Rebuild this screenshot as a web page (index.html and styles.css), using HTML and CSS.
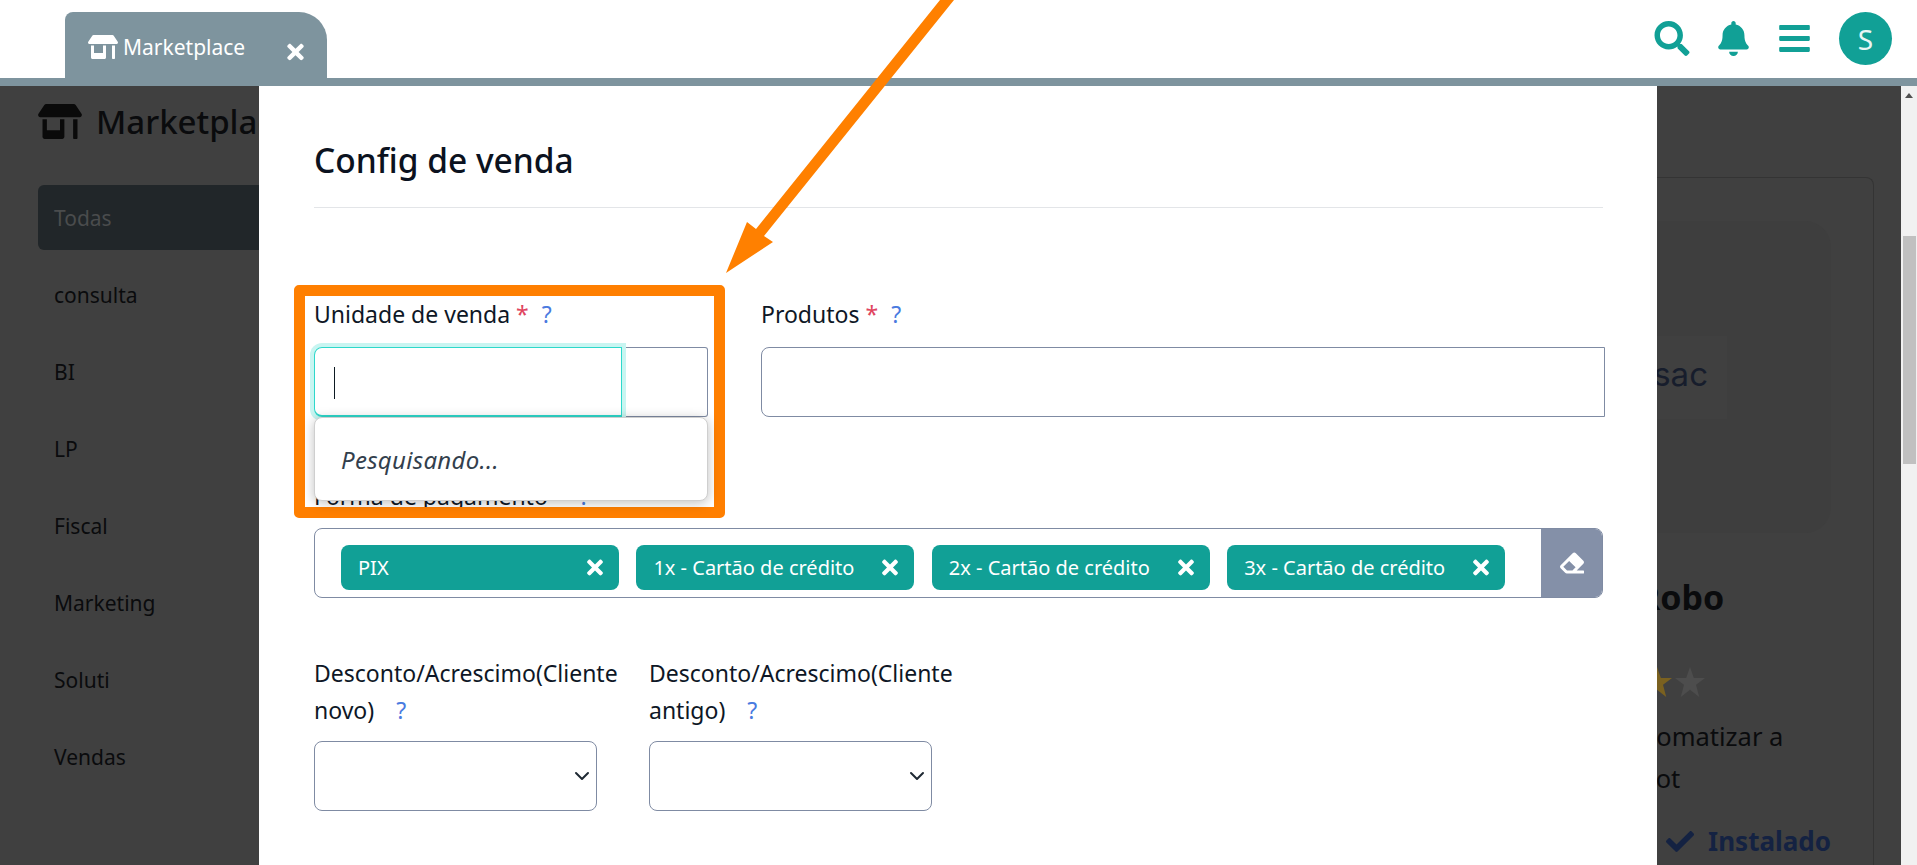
FILE: index.html
```html
<!DOCTYPE html>
<html>
  <head>
    <title>Marketplace</title>
    <link rel="stylesheet" href="styles.css">
  </head>
  <body>
    <svg class="defs">
      <symbol id="i-store" viewBox="0 0 640 512"><path d="M320 384H128V224H64v256c0 17.7 14.3 32 32 32h256c17.7 0 32-14.3 32-32V224h-64v160zm314.6-241.8l-85.3-128c-6-8.9-16-14.2-26.7-14.2H117.4c-10.7 0-20.7 5.3-26.6 14.2l-85.3 128c-14.2 21.3 1 49.8 26.6 49.8H608c25.5 0 40.7-28.5 26.6-49.8zM512 496c0 8.8 7.2 16 16 16h32c8.8 0 16-7.2 16-16V224h-64v272z"/></symbol>
      <symbol id="i-times" viewBox="0 0 352 512"><path d="M242.72 256l100.07-100.07c12.28-12.28 12.28-32.19 0-44.48l-22.24-22.24c-12.28-12.28-32.19-12.28-44.48 0L176 189.28 75.93 89.21c-12.28-12.28-32.19-12.28-44.48 0L9.21 111.45c-12.28 12.28-12.28 32.19 0 44.48L109.28 256 9.21 356.07c-12.28 12.28-12.28 32.19 0 44.48l22.24 22.24c12.28 12.28 32.2 12.28 44.48 0L176 322.72l100.07 100.07c12.28 12.28 32.2 12.28 44.48 0l22.24-22.24c12.28-12.28 12.28-32.19 0-44.48L242.72 256z"/></symbol>
      <symbol id="i-chevron" viewBox="0 0 16 16"><path d="M2 5l6 6 6-6" fill="none" stroke="currentColor" stroke-width="2" stroke-linecap="round" stroke-linejoin="round"/></symbol>
      <symbol id="i-star" viewBox="0 0 28 28"><path d="M14 0l3.6 10.200H28l-8.400 6.400 3 11.400L14 21.200 5.400 28l3-11.400L0 10.200h10.400z"/></symbol>
    </svg>

    <header class="topbar">
      <div class="tab">
        <svg class="tab-icon"><use href="#i-store"/></svg>
        <span class="tab-name">Marketplace</span>
        <svg class="tab-close"><use href="#i-times"/></svg>
      </div>
      <div class="topbar-actions">
        <svg class="action action-search" viewBox="0 0 512 512"><path d="M505 442.7L405.3 343c-4.500-4.500-10.600-7-17-7H372c27.600-35.300 44-79.700 44-128C416 93.100 322.900 0 208 0S0 93.100 0 208s93.100 208 208 208c48.300 0 92.700-16.400 128-44v16.300c0 6.400 2.500 12.500 7 17l99.700 99.700c9.400 9.400 24.600 9.400 33.900 0l28.300-28.300c9.400-9.400 9.400-24.600.1-34zM208 336c-70.700 0-128-57.200-128-128 0-70.700 57.200-128 128-128 70.700 0 128 57.200 128 128 0 70.700-57.200 128-128 128z"/></svg>
        <svg class="action action-bell" viewBox="0 0 448 512"><path d="M224 512c35.320 0 63.970-28.650 63.970-64H160.030c0 35.350 28.650 64 63.970 64zm215.390-149.710c-19.320-20.760-55.470-51.990-55.470-154.290 0-77.700-54.480-139.900-127.940-155.160V32c0-17.670-14.320-32-31.980-32s-31.980 14.330-31.980 32v20.840C118.560 68.100 64.080 130.300 64.080 208c0 102.300-36.150 133.530-55.470 154.290-6 6.450-8.660 14.160-8.610 21.710.11 16.400 12.980 32 32.100 32h383.800c19.120 0 32-15.600 32.100-32 .05-7.550-2.610-15.270-8.610-21.710z"/></svg>
        <svg class="action action-bars" viewBox="0 0 448 512"><path d="M16 132h416c8.837 0 16-7.163 16-16V76c0-8.837-7.163-16-16-16H16C7.163 60 0 67.163 0 76v40c0 8.837 7.163 16 16 16zm0 160h416c8.837 0 16-7.163 16-16v-40c0-8.837-7.163-16-16-16H16c-8.837 0-16 7.163-16 16v40c0 8.837 7.163 16 16 16zm0 160h416c8.837 0 16-7.163 16-16v-40c0-8.837-7.163-16-16-16H16c-8.837 0-16 7.163-16 16v40c0 8.837 7.163 16 16 16z"/></svg>
        <div class="avatar">S</div>
      </div>
    </header>

    <div class="workspace">
      <div class="page">
        <aside class="sidebar">
          <h2 class="page-title">
            <svg class="page-icon"><use href="#i-store"/></svg>
            Marketplace
          </h2>
          <ul class="categories">
            <li class="active">Todas</li>
            <li>consulta</li>
            <li>BI</li>
            <li>LP</li>
            <li>Fiscal</li>
            <li>Marketing</li>
            <li>Soluti</li>
            <li>Vendas</li>
          </ul>
        </aside>
        <main class="catalog">
          <article class="plugin">
            <div class="plugin-tile">
              <div class="plugin-logo">Robosac</div>
            </div>
            <div class="plugin-info">
              <h3>Robo</h3>
              <div class="stars">
                <svg class="star gold"><use href="#i-star"/></svg>
                <svg class="star"><use href="#i-star"/></svg>
              </div>
              <p>Automatizar a<span class="second-line">bot</span></p>
              <div class="installed">
                <svg viewBox="0 0 512 512"><path d="M173.898 439.404l-166.400-166.400c-9.997-9.997-9.997-26.206 0-36.204l36.203-36.204c9.997-9.998 26.207-9.998 36.204 0L192 312.690 432.095 72.596c9.997-9.997 26.207-9.997 36.204 0l36.203 36.204c9.997 9.997 9.997 26.206 0 36.204l-294.400 294.401c-9.998 9.997-26.207 9.997-36.204-.001z"/></svg>
                Instalado
              </div>
            </div>
          </article>
        </main>
      </div>

      <div class="scrollbar">
        <span class="scroll-up"></span>
        <span class="scroll-thumb"></span>
      </div>

      <section class="modal">
        <h1 class="modal-title">Config de venda</h1>

        <div class="row row-top">
          <div class="field">
            <label>Unidade de venda <span class="req">*</span> <span class="help">?</span></label>
            <div class="combo">
              <div class="combo-input"><span class="caret"></span></div>
              <div class="combo-side"></div>
              <div class="dropdown">Pesquisando...</div>
            </div>
          </div>
          <div class="field">
            <label>Produtos <span class="req">*</span> <span class="help">?</span></label>
            <div class="input"></div>
          </div>
        </div>

        <div class="field field-payment">
          <label>Forma de pagamento <span class="req">*</span> <span class="help">?</span></label>
          <div class="multi">
            <div class="chips">
              <span class="chip">PIX <svg><use href="#i-times"/></svg></span>
              <span class="chip">1x - Cartão de crédito <svg><use href="#i-times"/></svg></span>
              <span class="chip">2x - Cartão de crédito <svg><use href="#i-times"/></svg></span>
              <span class="chip">3x - Cartão de crédito <svg><use href="#i-times"/></svg></span>
            </div>
            <div class="clear">
              <svg viewBox="0 0 512 512"><path d="M497.941 273.941c18.745-18.745 18.745-49.137 0-67.882l-160-160c-18.745-18.745-49.136-18.746-67.883 0l-256 256c-18.745 18.745-18.745 49.137 0 67.882l96 96A48.004 48.004 0 0 0 144 480h356c6.627 0 12-5.373 12-12v-40c0-6.627-5.373-12-12-12H355.883l142.058-142.059zm-302.627-62.627l137.373 137.373L265.373 416H150.628l-80-80 124.686-124.686z"/></svg>
            </div>
          </div>
        </div>

        <div class="row row-discount">
          <div class="field">
            <label>Desconto/Acrescimo(Cliente novo) <span class="help">?</span></label>
            <div class="select"><svg><use href="#i-chevron"/></svg></div>
          </div>
          <div class="field">
            <label>Desconto/Acrescimo(Cliente antigo) <span class="help">?</span></label>
            <div class="select"><svg><use href="#i-chevron"/></svg></div>
          </div>
        </div>
      </section>
    </div>

    <!-- anotacao por cima do print -->
    <div class="highlight"></div>
    <svg class="arrow" viewBox="0 0 1917 865"><polygon points="726,273 747,222 756,229 940,0 954,0 764,236 773,242"/></svg>
  </body>
</html>
```

FILE: styles.css
```css
* {
  box-sizing: border-box;
}
html, body {
  height: 100%;
}
body {
  margin: 0;
  overflow: hidden;
  display: flex;
  flex-direction: column;
  position: relative;
  font-family: "Noto Sans", "Open Sans", sans-serif;
  font-size: 23px;
  color: #0e1726;
  background-color: #fff;
}
.defs {
  display: none;
}

/* top bar */
.topbar {
  height: 86px;
  flex: none;
  display: flex;
  align-items: flex-end;
  justify-content: space-between;
  padding-left: 65px;
  background-color: #fff;
  border-bottom: 8px solid #7e949e;
}
.tab {
  width: 262px;
  height: 66px;
  display: flex;
  align-items: center;
  padding: 6px 23px 0 23px;
  color: #fff;
  background-color: #7e949e;
  border-radius: 8px 28px 0 0;
}
.tab-icon {
  width: 30px;
  height: 24px;
  fill: #fff;
  margin-top: -2px;
}
.tab-name {
  margin: -3px 0 0 5px;
  font-size: 21px;
  flex: 1;
}
.tab-close {
  width: 17px;
  height: 24px;
  fill: #fff;
  margin-top: 7px;
}
.topbar-actions {
  align-self: flex-start;
  display: flex;
  align-items: center;
  padding: 12px 25px 0 0;
  gap: 29px;
}
.action {
  fill: #11a096;
  width: 36px;
  height: 35px;
}
.action-bell {
  width: 31px;
  margin: 0 1px 0 -1px;
}
.action-bars {
  width: 31px;
}
.avatar {
  width: 53px;
  height: 53px;
  border-radius: 50%;
  background-color: #11a096;
  color: #e9f6f5;
  font-size: 28px;
  display: flex;
  align-items: center;
  justify-content: center;
}

/* page behind the modal */
.workspace {
  flex: 1;
  min-height: 0;
  display: flex;
  position: relative;
}
.page {
  flex: 1;
  min-width: 0;
  display: flex;
  background-color: #404040;
  color: #0a0b0d;
}
.sidebar {
  width: 360px;
  flex: none;
  padding: 18px 0 0 38px;
}
.page-title {
  margin: 0;
  height: 35px;
  display: flex;
  align-items: center;
  gap: 14px;
  font-size: 33px;
  font-weight: 500;
  white-space: nowrap;
}
.page-icon {
  width: 44px;
  height: 35px;
  fill: #0a0a0a;
}
.categories {
  list-style: none;
  margin: 46px 0 0;
  padding: 0;
  display: flex;
  flex-direction: column;
  gap: 12px;
  font-size: 21px;
}
.categories li {
  height: 65px;
  display: flex;
  align-items: center;
  padding-left: 16px;
  border-radius: 6px;
}
.categories .active {
  background-color: #212629;
  color: #4a4c4d;
}
.catalog {
  flex: 1;
  margin: 91px 27px 0 30px;
  padding: 43px 42px 0;
  display: flex;
  justify-content: flex-end;
  border: 1px solid #343434;
  border-bottom: 0;
  border-radius: 8px 8px 0 0;
}
.plugin {
  width: 332px;
}
.plugin-tile {
  height: 312px;
  display: flex;
  align-items: center;
  justify-content: center;
  background-color: #3e3e3e;
  border-radius: 26px;
}
.plugin-logo {
  width: 124px;
  height: 83px;
  display: flex;
  align-items: center;
  justify-content: flex-end;
  padding: 0 19px 6px 0;
  background-color: #404040;
  font-family: Inter, sans-serif;
  font-size: 33px;
  color: #171d2c;
  white-space: nowrap;
  overflow: hidden;
}
.plugin-info {
  padding-left: 141px;
}
.plugin-info h3 {
  margin: 40px 0 0 -2px;
  font-size: 34px;
  font-weight: 700;
  line-height: 48px;
}
.stars {
  margin: 46px 0 0 2px;
  display: flex;
  gap: 3px;
}
.star {
  width: 30px;
  height: 30px;
  fill: #4d4d4d;
}
.star.gold {
  fill: #7a6120;
}
.plugin-info p {
  margin: 18px 0 0 -25px;
  font-size: 25.500px;
  line-height: 42px;
  white-space: nowrap;
}
.second-line {
  display: block;
  padding-left: 25px;
}
.installed {
  margin: 24px 0 0 26px;
  display: flex;
  align-items: center;
  gap: 14px;
  font-size: 26px;
  font-weight: 700;
  color: #142242;
  white-space: nowrap;
}
.installed svg {
  width: 29px;
  height: 29px;
  fill: #142242;
}

/* fake scrollbar */
.scrollbar {
  width: 16px;
  flex: none;
  display: flex;
  flex-direction: column;
  align-items: center;
  padding-top: 7px;
  background-color: #f1f1f1;
}
.scroll-up {
  border: 4px solid transparent;
  border-top: 0;
  border-bottom: 5px solid #505050;
  border-left-width: 4px;
}
.scroll-thumb {
  width: 13px;
  height: 228px;
  margin: 138px 0 0 1px;
  background-color: #c0c0c0;
}

/* modal */
.modal {
  position: absolute;
  top: 0;
  bottom: 0;
  left: 259px;
  width: 1398px;
  padding: 0 54px 0 55px;
  background-color: #fff;
}
.modal-title {
  margin: 0;
  height: 122px;
  display: flex;
  align-items: center;
  padding-top: 27px;
  font-size: 33.500px;
  font-weight: 500;
  color: #0b1220;
  border-bottom: 1px solid #e3e5e8;
}
.row {
  display: flex;
}
.row-top {
  margin: 88px -2px 0 0;
  gap: 53px;
}
.row-top .field:first-child {
  width: 394px;
  flex: none;
}
.row-top .field:last-child {
  flex: 1;
}
.field label {
  display: block;
  line-height: 37px;
  margin-bottom: 14px;
}
.req {
  color: #e0455f;
}
.help {
  color: #4a7ae0;
  margin-left: 7px;
}
.input,
.select,
.multi {
  height: 70px;
  border: 1px solid #7f8ba3;
  border-radius: 8px;
}
.input {
  border-radius: 8px 0 0 8px;
}
.combo {
  position: relative;
  display: flex;
  height: 70px;
}
.combo-input {
  width: 308px;
  display: flex;
  align-items: center;
  padding-left: 19px;
  border: 1px solid #2ed8cb;
  border-bottom-width: 2px;
  border-radius: 8px 0 0 8px;
  box-shadow: 0 0 0 4px #c8f5f1;
  position: relative;
  z-index: 1;
}
.caret {
  width: 1px;
  height: 32px;
  margin-top: 2px;
  background-color: #0d1a22;
}
.combo-side {
  flex: 1;
  border: 1px solid #7f8ba3;
  border-left: 0;
  border-radius: 0 3px 3px 0;
}
.dropdown {
  position: absolute;
  top: 70px;
  left: 0;
  right: 0;
  height: 84px;
  z-index: 2;
  display: flex;
  align-items: center;
  padding-left: 26px;
  font-size: 24px;
  letter-spacing: .3px;
  font-style: italic;
  color: #333f4d;
  background-color: #fff;
  border: 1px solid #cfcfcf;
  border-radius: 8px;
  box-shadow: 0 2px 12px rgba(0, 0, 0, .25);
}
.field-payment {
  margin-top: 61px;
}
.field-payment label {
  margin-bottom: 13px;
}
.multi {
  display: flex;
  overflow: hidden;
}
.chips {
  flex: 1;
  display: flex;
  align-items: center;
  gap: 17.400px;
  padding: 9px 0 0 26px;
}
.chip {
  width: 278px;
  height: 45px;
  display: flex;
  align-items: center;
  justify-content: space-between;
  padding: 0 16px 0 17px;
  font-size: 20px;
  color: #fff;
  background-color: #11a096;
  border-radius: 8px;
}
.chip svg {
  width: 16px;
  height: 23px;
  fill: #fff;
}
.clear {
  width: 61px;
  flex: none;
  display: flex;
  align-items: center;
  justify-content: center;
  background-color: #8490a8;
}
.clear svg {
  width: 24px;
  height: 24px;
  fill: #fff;
}
.row-discount {
  margin-top: 57px;
  gap: 52px;
}
.row-discount .field {
  width: 283px;
}
.row-discount label {
  margin-bottom: 12px;
}
.row-discount .help {
  margin-left: 16px;
}
.select {
  display: flex;
  align-items: center;
  justify-content: flex-end;
  padding-right: 6px;
  color: #1f2933;
}
.select svg {
  width: 16px;
  height: 16px;
}

/* annotation */
.highlight {
  position: absolute;
  left: 294px;
  top: 285px;
  width: 431px;
  height: 233px;
  border: 11px solid #ff7f00;
  border-radius: 5px;
}
.arrow {
  position: absolute;
  top: 0;
  left: 0;
  width: 1917px;
  height: 865px;
  fill: #ff8000;
}
```
